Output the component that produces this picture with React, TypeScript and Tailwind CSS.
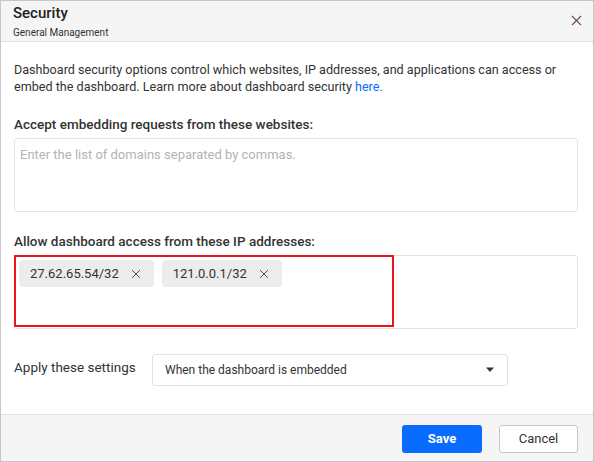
import { X } from 'lucide-react';

const font = { fontFamily: 'Roboto, "Liberation Sans", sans-serif' };

function Chip({ label }: { label: string }) {
  return (
    <div className="h-[27px] flex items-center gap-[10px] pl-[11px] pr-[11px] rounded-[4px] bg-[#ececec] text-[13px] text-[#333]">
      <span>{label}</span>
      <X className="w-[14px] h-[14px] text-[#444]" strokeWidth={1.6} />
    </div>
  );
}

export default function App() {
  return (
    <div
      className="w-[594px] h-[462px] bg-white border border-[#c6c6c6] flex flex-col overflow-hidden text-[#333]"
      style={font}
    >
      <div className="h-[41px] shrink-0 bg-[#f5f5f5] border-b border-[#e2e2e2] flex items-start justify-between pl-[12px] pr-[8px] pt-[3px]">
        <div className="flex flex-col">
          <span className="text-[15px] leading-[19px] font-medium text-[#222]">Security</span>
          <span className="text-[10px] leading-[14px] mt-[3px] text-[#333]">General Management</span>
        </div>
        <X className="w-[17px] h-[17px] mt-[8px] text-[#6a4a4a]" strokeWidth={1.5} />
      </div>

      <div className="flex-1 flex flex-col pl-[13px] pt-[19px]">
        <p className="text-[12.6px] leading-[17px] w-[570px] text-[#333]">
          Dashboard security options control which websites, IP addresses, and applications can access or
          embed the dashboard. Learn more about dashboard security <a className="text-[#0a6cff]">here.</a>
        </p>

        <label className="mt-[21px] text-[13.5px] leading-[17px] font-medium text-[#333]">
          Accept embedding requests from these websites:
        </label>
        <div className="mt-[5px] w-[564px] h-[74px] border border-[#e2e2e2] rounded-[3px] px-[5px] pt-[6px] text-[13px] text-[#b3b3b3]">
          Enter the list of domains separated by commas.
        </div>

        <label className="mt-[21px] text-[13.5px] leading-[17px] font-medium text-[#333]">
          Allow dashboard access from these IP addresses:
        </label>
        <div className="relative mt-[5px] w-[564px] h-[74px] border border-[#e2e2e2] rounded-[3px] pl-[4px] pt-[4px]">
          <div className="flex gap-[8px]">
            <Chip label="27.62.65.54/32" />
            <Chip label="121.0.0.1/32" />
          </div>
          <div className="absolute left-[-1px] top-[-1px] w-[380px] h-[72px] border-2 border-[#e8141e]" />
        </div>

        <div className="mt-[25px] flex items-center">
          <span className="w-[138px] -mt-[5px] text-[13.5px] text-[#333]">Apply these settings</span>
          <div className="w-[356px] h-[32px] border border-[#e2e2e2] rounded-[3px] flex items-center justify-between pl-[12px] pr-[12px] text-[12px] text-[#333]">
            <span>When the dashboard is embedded</span>
            <svg width="10" height="6" viewBox="0 0 10 6">
              <path d="M1 0.5 L9 0.5 L5 5 Z" fill="#333" />
            </svg>
          </div>
        </div>
      </div>

      <div className="h-[47px] shrink-0 bg-[#f5f5f5] border-t border-[#e2e2e2] flex items-start justify-end gap-[17px] pr-[15px] pt-[10px]">
        <button className="w-[80px] h-[28px] rounded-[3px] bg-[#0a6cff] text-white text-[13px] font-bold">
          Save
        </button>
        <button className="w-[79px] h-[28px] rounded-[3px] bg-white border border-[#c6c6c6] text-[13px] text-[#333]">
          Cancel
        </button>
      </div>
    </div>
  );
}
